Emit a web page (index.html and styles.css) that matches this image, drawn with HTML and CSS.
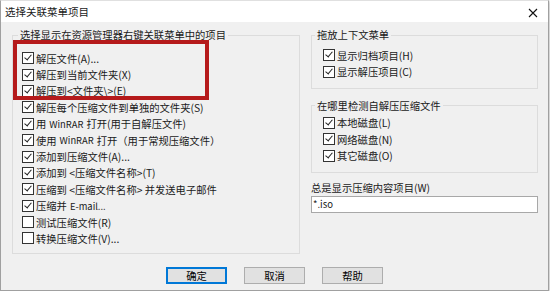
FILE: index.html
```html
<!DOCTYPE html>
<html lang="zh-CN">
<head>
  <meta charset="UTF-8" />
  <title>选择关联菜单项目</title>
  <link rel="stylesheet" href="styles.css">
</head>
<body>
  <div class="dialog">
    <div class="titlebar">
      <span class="title">选择关联菜单项目</span>
      <svg class="close" width="10" height="10" viewBox="0 0 10 10">
        <path d="M1 1L9 9M9 1L1 9" stroke="#111" stroke-width="1.1" fill="none"/>
      </svg>
    </div>

    <div class="content">
      <div class="columns">
        <fieldset class="group group-main">
          <legend>选择显示在资源管理器右键关联菜单中的项目</legend>
          <div class="list">
            <div class="opt"><span class="box on"></span>解压文件(A)...</div>
            <div class="opt"><span class="box on"></span>解压到当前文件夹(X)</div>
            <div class="opt"><span class="box on"></span>解压到&lt;文件夹\&gt;(E)</div>
            <div class="opt"><span class="box on"></span>解压每个压缩文件到单独的文件夹(S)</div>
            <div class="opt"><span class="box on"></span>用<span class="en">WinRAR</span>打开(用于自解压文件)</div>
            <div class="opt"><span class="box on"></span>使用<span class="en">WinRAR</span>打开（用于常规压缩文件）</div>
            <div class="opt"><span class="box on"></span>添加到压缩文件(A)...</div>
            <div class="opt"><span class="box on"></span>添加到 &lt;压缩文件名称&gt;(T)</div>
            <div class="opt"><span class="box on"></span>压缩到 &lt;压缩文件名称&gt; 并发送电子邮件</div>
            <div class="opt"><span class="box on"></span>压缩并<span class="en">E-mail...</span></div>
            <div class="opt"><span class="box"></span>测试压缩文件(R)</div>
            <div class="opt"><span class="box"></span>转换压缩文件(V)...</div>
          </div>
        </fieldset>

        <div class="side">
          <fieldset class="group group-drag">
            <legend>拖放上下文菜单</legend>
            <div class="list">
              <div class="opt"><span class="box on"></span>显示归档项目(H)</div>
              <div class="opt"><span class="box on"></span>显示解压项目(C)</div>
            </div>
          </fieldset>

          <fieldset class="group group-sfx">
            <legend>在哪里检测自解压压缩文件</legend>
            <div class="list">
              <div class="opt"><span class="box on"></span>本地磁盘(L)</div>
              <div class="opt"><span class="box on"></span>网络磁盘(N)</div>
              <div class="opt"><span class="box on"></span>其它磁盘(O)</div>
            </div>
          </fieldset>

          <div class="field-label">总是显示压缩内容项目(W)</div>
          <div class="textbox">*.iso</div>
        </div>
      </div>

      <div class="buttons">
        <button class="btn default">确定</button>
        <button class="btn">取消</button>
        <button class="btn">帮助</button>
      </div>
    </div>

    <div class="highlight"></div>
  </div>
</body>
</html>
```

FILE: styles.css
```css
body {
  margin: 0;
  background: #fff;
  font-family: "Noto Sans CJK SC", "Noto Sans", sans-serif;
  font-size: 10.3px;
  color: #1a1a1a;
}

.dialog {
  position: relative;
  width: 547px;
  height: 289px;
  border: 1px solid #a0a0a0;
  border-top-color: #e0e0e0;
  box-shadow: 1px 1px 3px rgba(0,0,0,0.25);
  display: flex;
  flex-direction: column;
}

.titlebar {
  height: 21px;
  background: #fff;
  display: flex;
  align-items: center;
  justify-content: space-between;
  padding: 0 10px 0 4px;
}

.title {
  font-size: 10.5px;
  line-height: 21px;
}

.close {
  margin-top: 2px;
}

.content {
  flex: 1;
  background: #f0f0f0;
  padding: 6px 9px 0 11px;
}

.columns {
  display: flex;
  align-items: flex-start;
}

.group {
  margin: 0;
  padding: 0;
  border: 1px solid #dcdcdc;
  min-width: 0;
}

.group legend {
  padding: 0 2px;
  line-height: 14px;
}

.group-main {
  width: 286px;
}

.group-main legend {
  margin-left: 5px;
}

.group-main .list {
  padding: 8px 0 6px 9px;
}

.side {
  margin-left: 11px;
  width: 227px;
}

.side .group legend {
  margin-left: 3px;
}

.group-drag .list {
  padding: 5px 0 8px 11px;
}

.group-sfx {
  margin-top: 10px;
}

.group-sfx .list {
  padding: 2px 0 8px 11px;
}

.opt {
  display: flex;
  align-items: center;
  height: 16.4px;
  white-space: nowrap;
}

.en {
  font-size: 9.4px;
  margin: 0 3px;
}

.box {
  position: relative;
  width: 10px;
  height: 10px;
  border: 1px solid #333;
  background: #fff;
  margin-right: 2px;
  flex: none;
}

.box.on::after {
  content: '';
  position: absolute;
  left: 3px;
  top: 0px;
  width: 3px;
  height: 6px;
  border: solid #222;
  border-width: 0 1.1px 1.1px 0;
  transform: rotate(40deg);
}

.field-label {
  margin-top: 8px;
  line-height: 14px;
}

.textbox {
  margin-top: 1px;
  height: 15px;
  line-height: 15px;
  border: 1px solid #a8a8a8;
  background: #fff;
  padding-left: 1px;
  font-size: 9.5px;
}

.buttons {
  display: flex;
  justify-content: center;
  gap: 17px;
  margin-top: 13px;
  padding-right: 2px;
}

.btn {
  width: 61px;
  height: 17px;
  padding: 0;
  font: inherit;
  line-height: 15px;
  background: #e1e1e1;
  border: 1px solid #adadad;
  color: #000;
}

.btn.default {
  border-color: #0078d7;
  box-shadow: inset 0 0 0 1px #0078d7;
}

.highlight {
  position: absolute;
  left: 12px;
  top: 39px;
  width: 188px;
  height: 52px;
  border: 4px solid #b51a1b;
}
```
